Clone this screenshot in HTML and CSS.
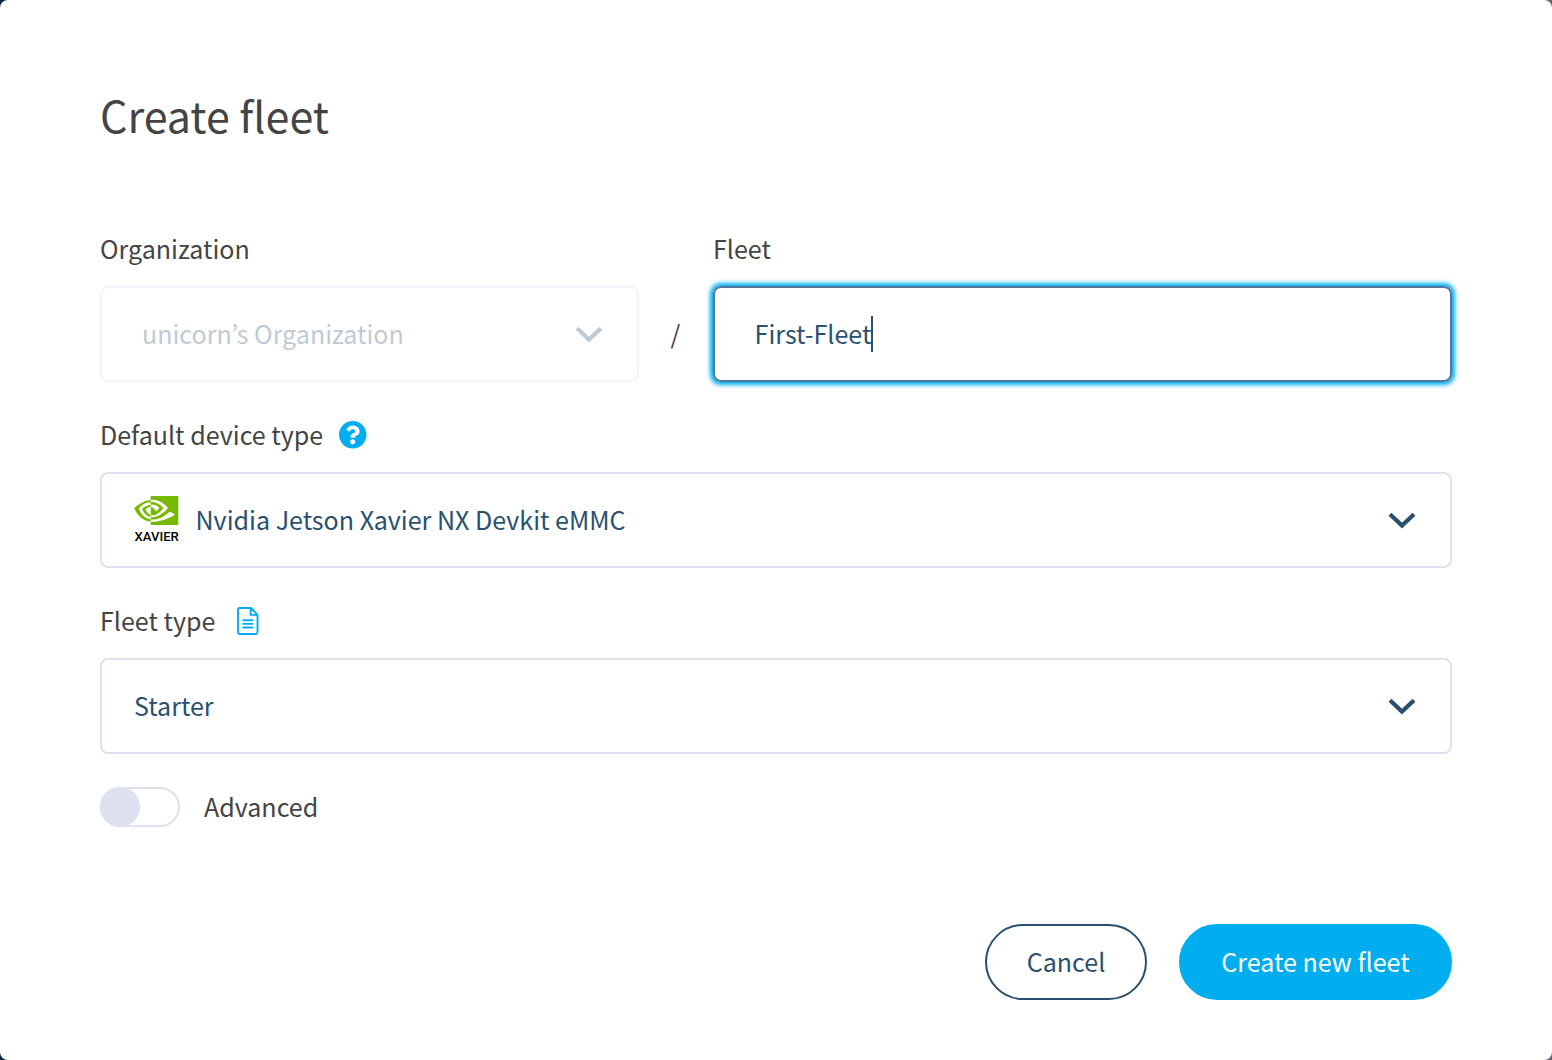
FILE: index.html
```html
<!DOCTYPE html>
<html lang="en">
<head>
<meta charset="utf-8">
<title>Create fleet</title>
<link rel="stylesheet" href="styles.css">
</head>
<body>
<main class="dialog">
  <h1 class="title">Create fleet</h1>
  <form class="form">
    <div class="name-row">
      <div class="field org-field">
        <div class="label"><span>Organization</span></div>
        <div class="box box-disabled">
          <span>unicorn’s Organization</span>
          <svg class="chevron" viewBox="0 0 28 18"><path d="M2 3.2 14 14.600l12-11.400"/></svg>
        </div>
      </div>
      <div class="slash">/</div>
      <div class="field fleet-field">
        <div class="label"><span>Fleet</span></div>
        <div class="box box-focused"><span>First-Fleet</span><i class="caret"></i></div>
      </div>
    </div>
    <div class="field">
      <div class="label"><span>Default device type</span>
        <svg class="help" viewBox="8 8 496 496"><path d="M504 256c0 136.997-111.043 248-248 248S8 392.997 8 256C8 119.083 119.043 8 256 8s248 111.083 248 248zM262.655 90c-54.497 0-89.255 22.957-116.549 63.758-3.536 5.286-2.353 12.415 2.715 16.258l34.699 26.31c5.205 3.947 12.621 3.008 16.665-2.122 17.864-22.658 30.113-35.797 57.303-35.797 20.429 0 45.698 13.148 45.698 32.958 0 14.976-12.363 22.667-32.534 33.976C247.128 238.528 216 254.941 216 296v4c0 6.627 5.373 12 12 12h56c6.627 0 12-5.373 12-12v-1.333c0-28.462 83.186-29.647 83.186-106.667 0-58.002-60.165-102-116.531-102zM256 338c-25.365 0-46 20.635-46 46 0 25.364 20.635 46 46 46s46-20.636 46-46c0-25.365-20.635-46-46-46z"/></svg>
      </div>
      <div class="box">
        <svg class="device-logo" viewBox="0 0 46 48">
          <path fill="#76b900" transform="translate(0.300 -7.450) scale(1.833)" d="M8.948 8.798v-1.43a6.7 6.7 0 0 1 .424-.018c3.922-.124 6.493 3.374 6.493 3.374s-2.774 3.851-5.75 3.851c-.398 0-.787-.062-1.158-.185v-4.346c1.528.185 1.837.857 2.747 2.385l2.04-1.714s-1.492-1.952-4-1.952a6.016 6.016 0 0 0-.796.035m0-4.735v2.138l.424-.027c5.45-.185 9.01 4.47 9.01 4.47s-4.08 4.964-8.33 4.964c-.37 0-.733-.035-1.095-.097v1.325c.3.035.61.062.91.062 3.957 0 6.82-2.023 9.593-4.408.459.371 2.34 1.263 2.73 1.652-2.633 2.208-8.772 3.984-12.253 3.984-.335 0-.653-.018-.971-.053v1.864H24V4.063zm0 10.326v1.131c-3.657-.654-4.673-4.46-4.673-4.46s1.758-1.944 4.673-2.262v1.237H8.94c-1.528-.186-2.73 1.245-2.73 1.245s.68 2.412 2.739 3.11M2.456 10.9s2.164-3.197 6.5-3.533V6.201C4.153 6.59 0 10.653 0 10.653s2.35 6.802 8.948 7.42v-1.237c-4.84-.6-6.492-5.936-6.492-5.936z"/>
          <text class="logo-text" x="0.500" y="44.500" textLength="44.300" lengthAdjust="spacingAndGlyphs">XAVIER</text>
        </svg>
        <span>Nvidia Jetson Xavier NX Devkit eMMC</span>
        <svg class="chevron" viewBox="0 0 28 18"><path d="M2 3.2 14 14.600l12-11.400"/></svg>
      </div>
    </div>
    <div class="field">
      <div class="label"><span>Fleet type</span>
        <svg class="doc" viewBox="0 0 22 28"><path d="M14 1H2.500Q1 1 1 2.500v23Q1 27 2.500 27h16.500q1.500 0 1.500-1.500V7.800zM13.700 1v6.900H20.500M5.500 13.200h10.800M5.500 16.900h10.800M5.500 20.500h10.800"/></svg>
      </div>
      <div class="box">
        <span>Starter</span>
        <svg class="chevron" viewBox="0 0 28 18"><path d="M2 3.2 14 14.600l12-11.400"/></svg>
      </div>
    </div>
    <div class="advanced"><i class="toggle"><i class="knob"></i></i><span>Advanced</span></div>
    <div class="actions">
      <button type="button" class="btn cancel"><span>Cancel</span></button>
      <button type="button" class="btn create"><span>Create new fleet</span></button>
    </div>
  </form>
</main>
</body>
</html>
```
FILE: styles.css
```css
* { box-sizing: border-box; }
body {
  margin: 0;
  background: linear-gradient(90deg, #10253f 50%, #57697a 50%);
  font-family: "Noto Sans CJK KR", "Noto Sans CJK SC", sans-serif;
  font-size: 25.06px;
  line-height: 36px;
  color: #444;
}
.dialog {
  width: 1552px;
  height: 1060px;
  padding: 79px 100px 60px;
  background: #fff;
  border-radius: 8px;
}
.title { margin: 0; height: 151px; font-size: 43px; font-weight: 400; line-height: 70px; }
.form { display: flex; flex-direction: column; gap: 34px; }
.name-row { display: flex; }
.org-field { width: 539px; }
.fleet-field { width: 739px; }
.slash { width: 73px; margin-right: 1px; padding-top: 85px; text-align: center; }
.label { display: flex; align-items: center; height: 36px; margin-bottom: 20px; white-space: nowrap; }
.box {
  display: flex;
  align-items: center;
  height: 96px;
  padding: 0 34px 0 32px;
  border: 2px solid #dde1f0;
  border-radius: 8px;
  color: #2a506f;
  white-space: nowrap;
}
.box span, .advanced span, .btn span { display: block; padding-bottom: 2px; }
.box-disabled { padding-left: 40px; border-color: #f4f5fa; color: #bfcbd4; }
.box-focused { padding-left: 39.6px; border-color: #527699; box-shadow: 0 0 4px 3px #00aeef; }
.caret { width: 2px; height: 36px; margin-left: -0.6px; background: #2a506f; }
.chevron { width: 28px; height: 18px; margin-left: auto; fill: none; stroke: currentColor; stroke-width: 4.2; }
.help { width: 27.5px; height: 27.5px; margin: 2px 0 0 16px; fill: #00aeef; }
.doc { width: 22px; height: 28px; margin: 2px 0 0 21.8px; fill: none; stroke: #00aeef; stroke-width: 1.9; }
.device-logo { width: 46px; height: 48px; margin-right: 15.5px; overflow: visible; }
.logo-text { font: 500 13.4px Roboto, sans-serif; fill: #000; }
.advanced { display: flex; align-items: center; gap: 24px; height: 40px; margin-top: -1px; }
.toggle { width: 80px; height: 40px; border: 2px solid #dde1f0; border-radius: 20px; }
.knob { display: block; width: 40px; height: 40px; margin: -2px; border-radius: 50%; background: #dde1f0; }
.actions { display: flex; justify-content: flex-end; gap: 32px; margin-top: 63px; }
.btn { height: 76px; padding: 0; border: 2px solid #2a506f; border-radius: 38px; background: #fff; color: #2a506f; font: inherit; white-space: nowrap; }
.cancel { width: 162px; }
.create { width: 273px; border-color: #00aeef; background: #00aeef; color: #fff; }
```
